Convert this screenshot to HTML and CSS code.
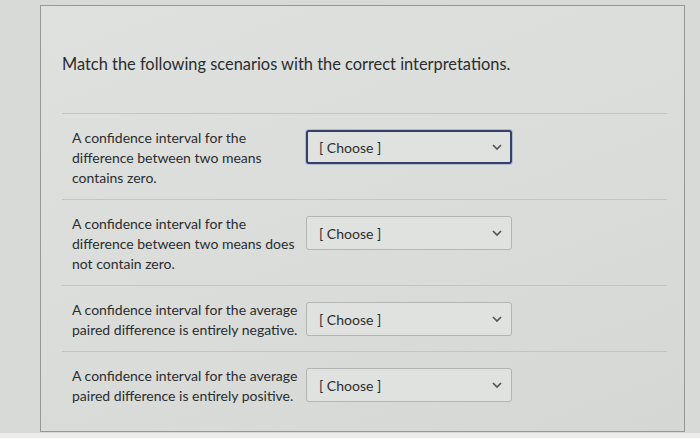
FILE: index.html
```html
<!DOCTYPE html>
<html lang="en">
<head>
<meta charset="utf-8">
<title>Matching question</title>
<link rel="stylesheet" href="styles.css">
</head>
<body>
<div class="page">
  <div class="question">
    <p class="prompt">Match the following scenarios with the correct interpretations.</p>
    <div class="answers">
      <div class="row">
        <div class="label">A confidence interval for the difference between two means contains zero.</div>
        <div class="select focused"><span>[ Choose ]</span><svg class="chev" viewBox="0 0 10 6" width="10" height="6"><path d="M1 1l4 4 4-4" fill="none" stroke="#555" stroke-width="1.7"/></svg></div>
      </div>
      <div class="row">
        <div class="label">A confidence interval for the difference between two means does not contain zero.</div>
        <div class="select"><span>[ Choose ]</span><svg class="chev" viewBox="0 0 10 6" width="10" height="6"><path d="M1 1l4 4 4-4" fill="none" stroke="#555" stroke-width="1.7"/></svg></div>
      </div>
      <div class="row">
        <div class="label">A confidence interval for the average paired difference is entirely negative.</div>
        <div class="select"><span>[ Choose ]</span><svg class="chev" viewBox="0 0 10 6" width="10" height="6"><path d="M1 1l4 4 4-4" fill="none" stroke="#555" stroke-width="1.7"/></svg></div>
      </div>
      <div class="row">
        <div class="label">A confidence interval for the average paired difference is entirely positive.</div>
        <div class="select"><span>[ Choose ]</span><svg class="chev" viewBox="0 0 10 6" width="10" height="6"><path d="M1 1l4 4 4-4" fill="none" stroke="#555" stroke-width="1.7"/></svg></div>
      </div>
    </div>
  </div>
</div>
</body>
</html>
```
FILE: styles.css
```css
html, body {
  margin: 0;
  padding: 0;
}
body {
  background: linear-gradient(to bottom, #d8dad7 0, #d8dad7 433px, #ecedeb 433px);
  font-family: Lato, "Open Sans", sans-serif;
  color: #2a2d30;
  height: 438px;
  overflow: hidden;
}
.page {
  padding: 5px 15px 0 40px;
}
.question {
  border: 1px solid #959895;
  background: linear-gradient(160deg, #dfe1de 0%, #dadcd9 60%, #d5d7d4 100%);
  padding: 47px 17px 26px 21px;
  height: 427px;
  box-sizing: border-box;
}
.prompt {
  margin: 0 0 38px 0;
  font-size: 16.4px;
  line-height: 22px;
}
.row {
  display: flex;
  align-items: flex-start;
  border-top: 1px solid #c3c5c2;
  padding: 14px 0 11px 10px;
}
.label {
  width: 228px;
  font-size: 14px;
  line-height: 20px;
}
.select {
  margin-left: 6px;
  margin-top: 2px;
  width: 206px;
  height: 34px;
  box-sizing: border-box;
  border: 1px solid #b3b5b2;
  border-radius: 3px;
  background: #e0e2df;
  display: flex;
  align-items: center;
  justify-content: space-between;
  padding: 0 9px 0 12px;
  font-size: 14px;
}
.select.focused {
  border: 2px solid #34406a;
  box-shadow: 0 0 0 1px #b4bccd;
  padding: 0 8px 0 11px;
}
.chev {
  display: block;
}
```
